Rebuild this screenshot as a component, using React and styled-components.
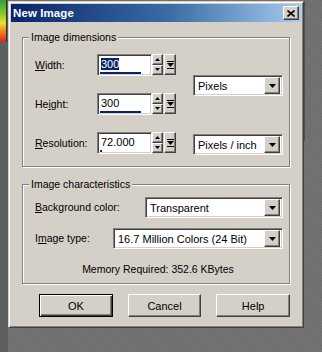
import React from "react";
import styled, { createGlobalStyle, css } from "styled-components";

const Global = createGlobalStyle`
  html, body { margin: 0; padding: 0; }
  body {
    background: #6e6e6e;
    font-family: "Liberation Sans", Arial, sans-serif;
    font-size: 10.5px;
    color: #000;
  }
`;

const Page = styled.div`
  width: 322px;
  height: 352px;
  display: flex;
  align-items: flex-start;
  overflow: hidden;
  background:
    repeating-linear-gradient(45deg, rgba(255,255,255,0.04) 0 1px, transparent 1px 2px),
    #6e6e6e;
`;

const LeftStrip = styled.div`
  width: 8px;
  height: 352px;
  display: flex;
  flex-direction: column;
  flex-shrink: 0;
  background: #5e5e5e;
`;

const Palette = styled.div`
  height: 42px;
  width: 6px;
  background: linear-gradient(180deg, #2fa040 0%, #7cc830 30%, #e8e030 55%, #f08020 75%, #e02020 100%);
  border-right: 1px solid #303030;
`;

const Rest = styled.div`
  flex: 1;
  border-left: 1px solid #505050;
  height: 140px;
  margin-top: 1px;
`;

const raised = css`
  border: 1px solid;
  border-color: #fff #404040 #404040 #fff;
  box-shadow: inset -1px -1px 0 #808080, inset 1px 1px 0 #d4d0c8;
  background: #d4d0c8;
  box-sizing: border-box;
`;

const sunken = css`
  border: 1px solid;
  border-color: #808080 #fff #fff #808080;
  box-shadow: inset 1px 1px 0 #404040, inset -1px -1px 0 #d4d0c8;
  background: #fff;
  box-sizing: border-box;
`;

const Dialog = styled.div`
  width: 296px;
  margin-top: 1px;
  box-sizing: border-box;
  border: 1px solid;
  border-color: #d4d0c8 #404040 #404040 #d4d0c8;
  box-shadow: inset 1px 1px 0 #fff, inset -1px -1px 0 #808080;
  padding: 2px;
  background: #d4d0c8;
  display: flex;
  flex-direction: column;
  flex-shrink: 0;
`;

const TitleBar = styled.div`
  height: 18px;
  display: flex;
  align-items: center;
  padding: 0 2px;
  background: linear-gradient(90deg, #0a246a 0%, #3a6ea5 55%, #a6caf0 100%);
`;

const Title = styled.div`
  flex: 1;
  color: #fff;
  font-weight: bold;
  font-size: 11.5px;
  letter-spacing: 0.1px;
`;

const CloseBtn = styled.div`
  ${raised};
  width: 16px;
  height: 14px;
  display: flex;
  align-items: center;
  justify-content: center;
`;

const Body = styled.div`
  display: flex;
  flex-direction: column;
  padding: 15px 11px 8px;
`;

const Group = styled.div`
  box-sizing: border-box;
  width: 268px;
  border: 1px solid #808080;
  box-shadow: inset 1px 1px 0 #fff, 1px 1px 0 #fff;
  display: flex;
  flex-direction: column;
  margin-top: ${(p) => p.$top || 0}px;
`;

const Caption = styled.div`
  align-self: flex-start;
  margin: -7px 0 0 6px;
  padding: 0 2px;
  line-height: 13px;
  background: #d4d0c8;
`;

const DimBody = styled.div`
  display: flex;
  padding: 10px 6px 11px 12px;
`;

const LeftCol = styled.div`
  display: flex;
  flex-direction: column;
  gap: 17px;
`;

const RightCol = styled.div`
  margin-left: auto;
  display: flex;
  flex-direction: column;
  padding-top: 21px;
  gap: 38px;
`;

const Row = styled.div`
  display: flex;
  align-items: center;
  height: ${(p) => p.$h || 22}px;
`;

const Label = styled.div`
  width: ${(p) => p.$w || 62}px;
  flex-shrink: 0;
  white-space: nowrap;
  line-height: 13px;
  u { text-decoration: underline; text-underline-offset: 1px; }
`;

const SpinField = styled.div`
  display: flex;
  height: 22px;
`;

const TextBox = styled.div`
  ${sunken};
  width: 55px;
  height: 22px;
  display: flex;
  flex-direction: column;
  padding: 2px 2px 1px 2px;
`;

const Value = styled.div`
  font-size: 11px;
  line-height: 13px;
  margin-top: 1px;
  padding-left: 1px;
`;

const Sel = styled.span`
  background: #0a246a;
  color: #fff;
`;

const Bar = styled.div`
  margin-top: auto;
  height: 2px;
  background: #0a246a;
`;

const Spin = styled.div`
  display: flex;
  flex-direction: column;
  width: 11px;
  height: 21px;
`;

const SpinBtn = styled.div`
  ${raised};
  flex: 1;
  display: flex;
  align-items: center;
  justify-content: center;
`;

const MenuBtn = styled.div`
  ${raised};
  width: 12px;
  height: 21px;
  margin-left: 1px;
  display: flex;
  align-items: center;
  justify-content: center;
`;

const Select = styled.div`
  ${sunken};
  width: ${(p) => p.$w}px;
  height: 21px;
  display: flex;
  align-items: center;
  padding: 2px;
  margin-left: ${(p) => (p.$push ? "auto" : "0")};
`;

const SelText = styled.div`
  flex: 1;
  font-size: 11px;
  padding-left: 2px;
  white-space: nowrap;
  overflow: hidden;
`;

const ArrowBtn = styled.div`
  ${raised};
  width: 16px;
  height: 17px;
  display: flex;
  align-items: center;
  justify-content: center;
`;

const CharBody = styled.div`
  display: flex;
  flex-direction: column;
  padding: 6px 6px 7px 12px;
`;

const CharRows = styled.div`
  display: flex;
  flex-direction: column;
  gap: 10px;
`;

const Memory = styled.div`
  margin-top: 14px;
  line-height: 13px;
  text-align: center;
  padding-right: 2px;
`;

const Buttons = styled.div`
  display: flex;
  gap: 15px;
  padding-left: 17px;
  margin-top: 10px;
`;

const Button = styled.div`
  ${raised};
  width: 75px;
  height: 23px;
  display: flex;
  align-items: center;
  justify-content: center;
  font-size: 11px;
  ${(p) =>
    p.$default &&
    css`
      border: 1px solid #000;
      box-shadow: inset 1px 1px 0 #fff, inset -1px -1px 0 #404040, inset -2px -2px 0 #808080;
    `}
`;

const Down = () => (
  <svg width="7" height="4" viewBox="0 0 7 4">
    <path d="M0 0h7L3.5 4z" fill="#000" />
  </svg>
);

const Tiny = ({ up }) => (
  <svg width="5" height="3" viewBox="0 0 5 3">
    <path d={up ? "M2.5 0L5 3H0z" : "M0 0h5L2.5 3z"} fill="#000" />
  </svg>
);

const MenuGlyph = () => (
  <svg width="7" height="8" viewBox="0 0 7 8">
    <rect x="0" y="0" width="7" height="1" fill="#000" />
    <path d="M0 2h7L3.5 6z" fill="#000" />
    <rect x="0" y="7" width="7" height="1" fill="#000" />
  </svg>
);

const CloseGlyph = () => (
  <svg width="8" height="7" viewBox="0 0 8 7">
    <path d="M0.5 0.5L7.5 6.5M7.5 0.5L0.5 6.5" stroke="#000" strokeWidth="1.6" />
  </svg>
);

const Spinner = ({ value, bar, selected }) => (
  <SpinField>
    <TextBox>
      <Value>{selected ? <Sel>{value}</Sel> : value}</Value>
      <Bar style={{ width: bar }} />
    </TextBox>
    <Spin>
      <SpinBtn><Tiny up /></SpinBtn>
      <SpinBtn><Tiny /></SpinBtn>
    </Spin>
    <MenuBtn><MenuGlyph /></MenuBtn>
  </SpinField>
);

const Dropdown = ({ w, children, push }) => (
  <Select $w={w} $push={push}>
    <SelText>{children}</SelText>
    <ArrowBtn><Down /></ArrowBtn>
  </Select>
);

export default function App() {
  return (
    <>
      <Global />
      <Page>
        <LeftStrip>
          <Palette />
        </LeftStrip>
        <Dialog>
          <TitleBar>
            <Title>New Image</Title>
            <CloseBtn><CloseGlyph /></CloseBtn>
          </TitleBar>
          <Body>
            <Group>
              <Caption>Image dimensions</Caption>
              <DimBody>
                <LeftCol>
                  <Row>
                    <Label><u>W</u>idth:</Label>
                    <Spinner value="300" bar="41px" selected />
                  </Row>
                  <Row>
                    <Label>He<u>i</u>ght:</Label>
                    <Spinner value="300" bar="41px" />
                  </Row>
                  <Row>
                    <Label><u>R</u>esolution:</Label>
                    <Spinner value="72.000" bar="2px" />
                  </Row>
                </LeftCol>
                <RightCol>
                  <Dropdown w={90}>Pixels</Dropdown>
                  <Dropdown w={90}>Pixels / inch</Dropdown>
                </RightCol>
              </DimBody>
            </Group>
            <Group $top={17}>
              <Caption>Image characteristics</Caption>
              <CharBody>
                <CharRows>
                  <Row $h={21}>
                    <Label $w={100}><u>B</u>ackground color:</Label>
                    <Dropdown w={138} push>Transparent</Dropdown>
                  </Row>
                  <Row $h={21}>
                    <Label $w={78}>I<u>m</u>age type:</Label>
                    <Dropdown w={170} push>16.7 Million Colors (24 Bit)</Dropdown>
                  </Row>
                </CharRows>
                <Memory>Memory Required: 352.6 KBytes</Memory>
              </CharBody>
            </Group>
            <Buttons>
              <Button $default>OK</Button>
              <Button>Cancel</Button>
              <Button>Help</Button>
            </Buttons>
          </Body>
        </Dialog>
        <Rest />
      </Page>
    </>
  );
}
